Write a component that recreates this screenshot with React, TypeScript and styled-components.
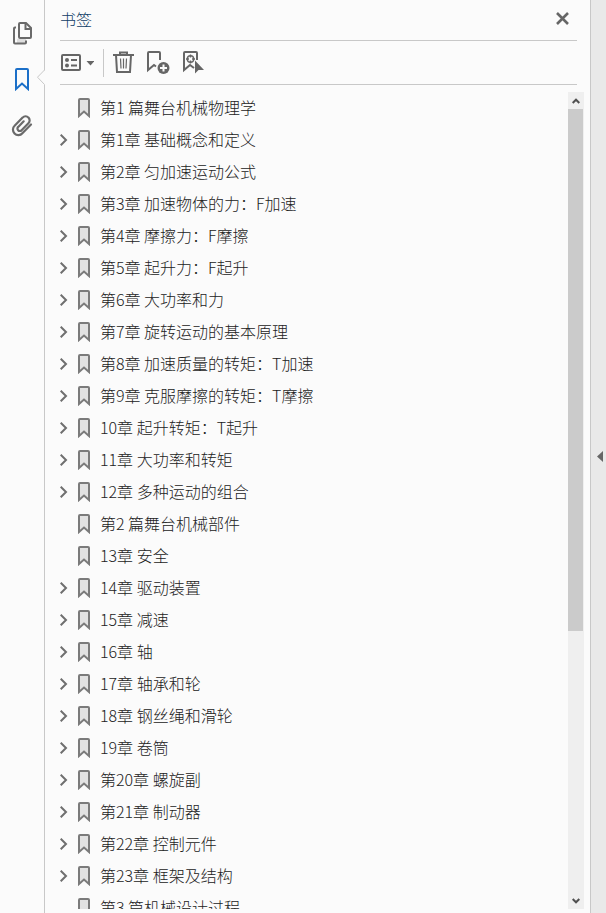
import React, { useState } from "react";
import styled, { createGlobalStyle } from "styled-components";

const GlobalStyle = createGlobalStyle`
  * { box-sizing: border-box; }
  body {
    margin: 0;
    background: #fbfbfb;
    color: #222;
    font-family: "Noto Sans CJK SC", sans-serif;
    font-size: 16px;
  }
  button { margin: 0; padding: 0; border: 0; background: none; font: inherit; color: inherit; cursor: pointer; }
`;

const Page = styled.div`
  display: flex;
  height: 100vh;
  overflow: hidden;
`;

const Rail = styled.nav`
  position: relative;
  flex: none;
  display: flex;
  flex-direction: column;
  width: 45px;
  padding-top: 10px;
  border-right: 1px solid #c8c8c8;
`;

const RailButton = styled.button<{ $active?: boolean }>`
  display: flex;
  align-items: center;
  justify-content: center;
  height: 46px;
  color: ${(p) => (p.$active ? "#1b6fc8" : "#6a6a6a")};
`;

const Notch = styled.svg`
  position: absolute;
  right: -1px;
  top: 70px;
`;

const Panel = styled.main`
  flex: 1;
  min-width: 0;
  display: flex;
  flex-direction: column;
  padding: 0 6px 4px 15px;
`;

const Header = styled.header`
  display: flex;
  align-items: center;
  justify-content: space-between;
  height: 41px;
  margin-right: 7px;
  padding: 0 8px 3px 0;
  border-bottom: 1px solid #c8c8c8;
`;

const Title = styled.h1`
  margin: 0;
  font-size: 16px;
  line-height: 24px;
  font-weight: 300;
  color: #0f3d66;
`;

const IconButton = styled.button`
  display: flex;
  align-items: center;
  color: #666;
`;

const Toolbar = styled.div`
  display: flex;
  align-items: center;
  gap: 13px;
  height: 44px;
  margin-right: 7px;
  padding-left: 1px;
  border-bottom: 1px solid #c8c8c8;
`;

const Divider = styled.span`
  width: 1px;
  height: 28px;
  margin: 0 -4px;
  background: #c8c8c8;
`;

const Body = styled.div`
  flex: 1;
  min-height: 0;
  display: flex;
  margin-top: 7px;
`;

const Tree = styled.ul`
  flex: 1;
  min-width: 0;
  margin: 0;
  padding: 0;
  overflow: hidden;
  list-style: none;
`;

const Row = styled.li`
  display: grid;
  grid-template-columns: 18px 1fr;
  align-items: center;
  height: 32px;
`;

const Toggle = styled.button<{ $open: boolean }>`
  display: flex;
  width: 8px;
  transform: ${(p) => (p.$open ? "rotate(90deg)" : "none")};
`;

const Entry = styled.button`
  grid-column: 2;
  display: flex;
  align-items: center;
  gap: 10px;
  height: 32px;
  text-align: left;
  white-space: nowrap;
`;

const Label = styled.span`
  padding-bottom: 2px;
  font-weight: 300;
  line-height: 24px;
`;

const ScrollBar = styled.div`
  flex: none;
  display: flex;
  flex-direction: column;
  width: 16px;
  background: #efefef;
`;

const ScrollStep = styled.button`
  display: flex;
  align-items: center;
  justify-content: center;
  width: 15px;
  height: 17px;
`;

const Track = styled.div`
  flex: 1;
`;

const Thumb = styled.div`
  width: 15px;
  height: 66.7%;
  background: #cbcbcb;
`;

const Side = styled.aside`
  flex: none;
  display: flex;
  align-items: center;
  justify-content: flex-end;
  width: 16px;
  padding-right: 3px;
  border-left: 1px solid #c8c8c8;
  background: #e9e9e9;
`;

const PagesIcon = () => (
  <svg width="22" height="24" viewBox="1 0 22 24" fill="none" stroke="currentColor" strokeWidth="2">
    <path d="M7 18h9v4H7z" fill="#dedede" stroke="none" />
    <path d="M6 7H5a1 1 0 0 0-1 1v14a1 1 0 0 0 1 1h10a1 1 0 0 0 1-1v-2" transform="translate(0 -.5)" />
    <path d="M10 2h6l5 5v9a1 1 0 0 1-1 1H10a1 1 0 0 1-1-1V3a1 1 0 0 1 1-1z" />
    <path d="M15.500 2v6H21" />
  </svg>
);

const RailBookmarkIcon = () => (
  <svg width="14" height="24" viewBox="0 0 14 24" fill="none" stroke="currentColor" strokeWidth="2">
    <path d="M2 2h10a1 1 0 0 1 1 1v19l-6-5.500-6 5.500V3a1 1 0 0 1 1-1z" />
  </svg>
);

const ClipIcon = () => (
  <svg width="22" height="24" viewBox="0 0 22 24" fill="none" stroke="currentColor" strokeWidth="2.200" strokeLinecap="round">
    <path d="M20 11.5 11.400 20.2a5.3 5.3 0 0 1-7.9.2 5.3 5.3 0 0 1 .1-7.6l8-8.2a3.9 3.9 0 0 1 5.9 0 3.9 3.9 0 0 1-.1 5.6l-6.8 7a2.3 2.3 0 0 1-3.5 0 2.3 2.3 0 0 1 .1-3.3l5.5-5.6" />
  </svg>
);

const CloseIcon = () => (
  <svg width="13" height="13" viewBox="0 0 13 13" stroke="currentColor" strokeWidth="2.600">
    <path d="m1 1 11 11M12 1 1 12" />
  </svg>
);

const OptionsIcon = () => (
  <svg width="33" height="18" viewBox="0 0 33 18" fill="none" stroke="currentColor" strokeWidth="2">
    <rect x="1" y="1" width="18" height="15" rx="1" />
    <circle cx="6" cy="6" r="2" fill="currentColor" stroke="none" />
    <circle cx="6" cy="11.5" r="2" fill="currentColor" stroke="none" />
    <path d="M10 6h6M10 11.5h6" />
    <path d="M25.500 7h8l-4 4.500z" fill="currentColor" stroke="none" />
  </svg>
);

const TrashIcon = () => (
  <svg width="21" height="23" viewBox="0 0 21 23" fill="none" stroke="currentColor" strokeWidth="2">
    <path d="M0 4h21M7 3.5V1.5h7v2M3 4l1 17h13l1-17" />
    <path d="m7.5 7.5.5 10M10.5 7.5v10M13.5 7.5l-.5 10" strokeWidth="1.2" />
  </svg>
);

const AddBookmarkIcon = () => (
  <svg width="23" height="23" viewBox="0 0 23 23" fill="none" stroke="currentColor" strokeWidth="2">
    <path d="M13 9V2a1 1 0 0 0-1-1H2a1 1 0 0 0-1 1v17l6-5 2 1.500" />
    <circle cx="16.5" cy="17" r="6" fill="currentColor" stroke="none" />
    <path d="M16.5 13.5v7M13 17h7" stroke="#fbfbfb" />
  </svg>
);

const FindBookmarkIcon = () => (
  <svg width="21" height="23" viewBox="0 0 21 23" fill="none" stroke="currentColor" strokeWidth="2">
    <path d="M14 9V2a1 1 0 0 0-1-1H2a1 1 0 0 0-1 1v17l6-5 4 3" />
    <circle cx="7.5" cy="8" r="3.2" strokeWidth="1.4" />
    <path d="M7.5 3.500v3M7.5 9.500v3M3 8h3M9 8h3" strokeWidth="1.4" />
    <path d="M12 9.500v13l3.5-3.500H21z" fill="currentColor" stroke="none" />
  </svg>
);

const ItemBookmarkIcon = () => (
  <svg width="12" height="20" viewBox="0 0 12 20" fill="#e2e2e2" stroke="#7b7b7b" strokeWidth="2">
    <path d="M2 1h8a1 1 0 0 1 1 1v16l-5-4.500-5 4.500V2a1 1 0 0 1 1-1z" />
  </svg>
);

const ChevronIcon = () => (
  <svg width="8" height="12" viewBox="0 0 8 12" fill="none" stroke="#6f6f6f" strokeWidth="2">
    <path d="M.7.7 6 6 .7 11.300" />
  </svg>
);

const StepIcon = ({ down }: { down?: boolean }) => (
  <svg width="8" height="6" viewBox="0 0 8 6" fill="none" stroke="#505050" strokeWidth="2">
    <path d={down ? "m.7 1 3.3 3.3L7.3 1" : "M.7 5 4 1.7 7.3 5"} />
  </svg>
);

const items: { label: string; branch: boolean }[] = [
  { label: "第1 篇舞台机械物理学", branch: false },
  { label: "第1章 基础概念和定义", branch: true },
  { label: "第2章 匀加速运动公式", branch: true },
  { label: "第3章 加速物体的力：F加速", branch: true },
  { label: "第4章 摩擦力：F摩擦", branch: true },
  { label: "第5章 起升力：F起升", branch: true },
  { label: "第6章 大功率和力", branch: true },
  { label: "第7章 旋转运动的基本原理", branch: true },
  { label: "第8章 加速质量的转矩：T加速", branch: true },
  { label: "第9章 克服摩擦的转矩：T摩擦", branch: true },
  { label: "10章 起升转矩：T起升", branch: true },
  { label: "11章 大功率和转矩", branch: true },
  { label: "12章 多种运动的组合", branch: true },
  { label: "第2 篇舞台机械部件", branch: false },
  { label: "13章 安全", branch: false },
  { label: "14章 驱动装置", branch: true },
  { label: "15章 减速", branch: true },
  { label: "16章 轴", branch: true },
  { label: "17章 轴承和轮", branch: true },
  { label: "18章 钢丝绳和滑轮", branch: true },
  { label: "19章 卷筒", branch: true },
  { label: "第20章 螺旋副", branch: true },
  { label: "第21章 制动器", branch: true },
  { label: "第22章 控制元件", branch: true },
  { label: "第23章 框架及结构", branch: true },
  { label: "第3 篇机械设计过程", branch: false },
];

function BookmarkRow({ label, branch }: { label: string; branch: boolean }) {
  const [open, setOpen] = useState(false);
  return (
    <Row>
      {branch && (
        <Toggle $open={open} aria-expanded={open} aria-label={label} onClick={() => setOpen(!open)}>
          <ChevronIcon />
        </Toggle>
      )}
      <Entry>
        <ItemBookmarkIcon />
        <Label>{label}</Label>
      </Entry>
    </Row>
  );
}

export default function App() {
  return (
    <>
      <GlobalStyle />
      <Page>
        <Rail>
          <RailButton aria-label="页面缩略图"><PagesIcon /></RailButton>
          <RailButton $active aria-label="书签"><RailBookmarkIcon /></RailButton>
          <RailButton aria-label="附件"><ClipIcon /></RailButton>
          <Notch width="8" height="15" viewBox="0 0 8 15">
            <path d="M8 .5 7.5 0 .5 7l7 7.5.5.5z" fill="#fbfbfb" />
            <path d="M7.5 0 .5 7.2l7 7.3" fill="none" stroke="#c8c8c8" />
          </Notch>
        </Rail>
        <Panel>
          <Header>
            <Title>书签</Title>
            <IconButton aria-label="关闭"><CloseIcon /></IconButton>
          </Header>
          <Toolbar>
            <IconButton aria-label="选项"><OptionsIcon /></IconButton>
            <Divider />
            <IconButton aria-label="删除书签"><TrashIcon /></IconButton>
            <IconButton aria-label="新建书签"><AddBookmarkIcon /></IconButton>
            <IconButton aria-label="查找当前书签"><FindBookmarkIcon /></IconButton>
          </Toolbar>
          <Body>
            <Tree>
              {items.map((item) => (
                <BookmarkRow key={item.label} {...item} />
              ))}
            </Tree>
            <ScrollBar>
              <ScrollStep aria-label="向上滚动"><StepIcon /></ScrollStep>
              <Track><Thumb /></Track>
              <ScrollStep aria-label="向下滚动"><StepIcon down /></ScrollStep>
            </ScrollBar>
          </Body>
        </Panel>
        <Side>
          <IconButton aria-label="折叠">
            <svg width="6" height="11" viewBox="0 0 6 11" fill="currentColor"><path d="M6 0v11L0 5.5z" /></svg>
          </IconButton>
        </Side>
      </Page>
    </>
  );
}
